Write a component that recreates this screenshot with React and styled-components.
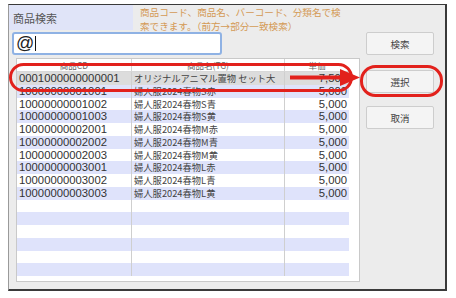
import React from "react";
import styled, { createGlobalStyle } from "styled-components";

const Global = createGlobalStyle`
  html, body { margin: 0; padding: 0; background: #ffffff; }
  body { font-family: "Liberation Sans", "Noto Sans CJK JP", sans-serif; }
`;

const Page = styled.div`
  position: relative;
  width: 456px;
  height: 298px;
  overflow: hidden;
`;

const Window = styled.div`
  position: relative;
  margin: 4px 0 0 8px;
  width: 436px;
  height: 284px;
  background: #ececec;
  border-top: 1px solid #3a3a3a;
  border-right: 2px solid #3a3a3a;
  border-bottom: 2px solid #3a3a3a;
  border-left: 1px solid #9a9a9a;
  display: flex;
  flex-direction: column;
`;

const TopBar = styled.div`
  display: flex;
  height: 26px;
`;

const TitleBox = styled.div`
  width: 124px;
  height: 25px;
  background: #e0e4f8;
  color: #555;
  font-family: "Noto Sans CJK JP", sans-serif;
  font-size: 11px;
  display: flex;
  align-items: center;
  padding-left: 4px;
  box-sizing: border-box;
`;

const Help = styled.div`
  margin-left: 7px;
  padding-top: 1px;
  color: #d49a55;
  font-family: "Noto Sans CJK JP", sans-serif;
  font-size: 9.6px;
  line-height: 13.5px;
`;

const Body = styled.div`
  display: flex;
  padding-top: 1px;
`;

const LeftCol = styled.div`
  width: 352px;
  display: flex;
  flex-direction: column;
`;

const Input = styled.div`
  margin-left: 3px;
  width: 210px;
  height: 23px;
  box-sizing: border-box;
  background: #fff;
  border: 2px solid #8fb2e4;
  border-radius: 3px;
  display: flex;
  align-items: center;
  padding-left: 2px;
  font-size: 18px;
  color: #222;
`;

const Caret = styled.span`
  display: inline-block;
  width: 1px;
  height: 15px;
  background: #111;
  margin-left: 1px;
`;

const Table = styled.div`
  margin: 3px 0 0 7px;
  width: 344px;
  height: 224px;
  box-sizing: border-box;
  background: #fff;
  border: 1px solid #c9c9c9;
  overflow: hidden;
`;

const Grid = styled.div`
  width: 332px;
  display: grid;
  grid-template-columns: 115px 153px 64px;
`;

const HeadCell = styled.div`
  height: 12px;
  font-family: "Noto Sans CJK JP", sans-serif;
  font-size: 8.5px;
  line-height: 12px;
  color: #666;
  text-align: center;
  border-bottom: 1px solid #d8d8d8;
  border-right: ${(p) => (p.$last ? "none" : "1px solid #d4d4d4")};
`;

const Cell = styled.div`
  height: 12.75px;
  box-sizing: border-box;
  background: ${(p) => (p.$sel ? "#dcdcdc" : p.$odd ? "#dfe3fb" : "#ffffff")};
  border-right: ${(p) => (p.$last ? "none" : "1px solid #cfcfcf")};
  font-size: ${(p) => (p.$cjk ? "9.3px" : "11.3px")};
  font-family: ${(p) =>
    p.$cjk ? '"Noto Sans CJK JP", sans-serif' : '"Liberation Sans", sans-serif'};
  color: ${(p) => (p.$cjk ? "#444" : "#333")};
  line-height: 12.75px;
  white-space: nowrap;
  overflow: hidden;
  text-align: ${(p) => (p.$right ? "right" : "left")};
  padding: ${(p) => (p.$right ? "0 2px 0 0" : "0 0 0 2px")};
`;

const RightCol = styled.div`
  margin-left: 5px;
  width: 68px;
  display: flex;
  flex-direction: column;
`;

const Button = styled.div`
  height: 23px;
  margin-top: ${(p) => p.$gap}px;
  box-sizing: border-box;
  background: #f4f4f4;
  border: 1px solid #cdcdcd;
  border-radius: 2px;
  display: flex;
  align-items: center;
  justify-content: center;
  font-family: "Noto Sans CJK JP", sans-serif;
  font-size: 9.5px;
  color: #444;
`;

const Overlay = styled.svg`
  position: absolute;
  left: 0;
  top: 0;
  pointer-events: none;
`;

const rows = [
  ["0001000000000001", "オリジナルアニマル置物 セット大", "7,500"],
  ["10000000001001", "婦人服2024春物S赤", "5,000"],
  ["10000000001002", "婦人服2024春物S青", "5,000"],
  ["10000000001003", "婦人服2024春物S黄", "5,000"],
  ["10000000002001", "婦人服2024春物M赤", "5,000"],
  ["10000000002002", "婦人服2024春物M青", "5,000"],
  ["10000000002003", "婦人服2024春物M黄", "5,000"],
  ["10000000003001", "婦人服2024春物L赤", "5,000"],
  ["10000000003002", "婦人服2024春物L青", "5,000"],
  ["10000000003003", "婦人服2024春物L黄", "5,000"],
];
while (rows.length < 16) rows.push(["", "", ""]);

export default function App() {
  return (
    <Page>
      <Global />
      <Window>
        <TopBar>
          <TitleBox>商品検索</TitleBox>
          <Help>
            商品コード、商品名、バーコード、分類名で検
            <br />
            索できます。（前方→部分一致検索）
          </Help>
        </TopBar>
        <Body>
          <LeftCol>
            <Input>
              @<Caret />
            </Input>
            <Table>
              <Grid>
                <HeadCell>商品CD</HeadCell>
                <HeadCell>商品名(TG)</HeadCell>
                <HeadCell $last>単価</HeadCell>
                {rows.map((r, i) => (
                  <React.Fragment key={i}>
                    <Cell $sel={i === 0} $odd={i % 2 === 1}>{r[0]}</Cell>
                    <Cell $sel={i === 0} $odd={i % 2 === 1} $cjk>{r[1]}</Cell>
                    <Cell $sel={i === 0} $odd={i % 2 === 1} $right $last>{r[2]}</Cell>
                  </React.Fragment>
                ))}
              </Grid>
            </Table>
          </LeftCol>
          <RightCol>
            <Button $gap={0}>検索</Button>
            <Button $gap={15}>選択</Button>
            <Button $gap={13}>取消</Button>
          </RightCol>
        </Body>
      </Window>
      <Overlay width="456" height="298" viewBox="0 0 456 298">
        <rect x="10.5" y="64.5" width="341" height="26" rx="13" fill="none" stroke="#e2211c" strokeWidth="3" />
        <line x1="290" y1="77.5" x2="342" y2="77.5" stroke="#e2211c" strokeWidth="4" />
        <polygon points="340,69 360,77.5 340,86" fill="#e2211c" />
        <rect x="361.5" y="66.5" width="80" height="29" rx="14" fill="none" stroke="#e2211c" strokeWidth="3" />
      </Overlay>
    </Page>
  );
}
